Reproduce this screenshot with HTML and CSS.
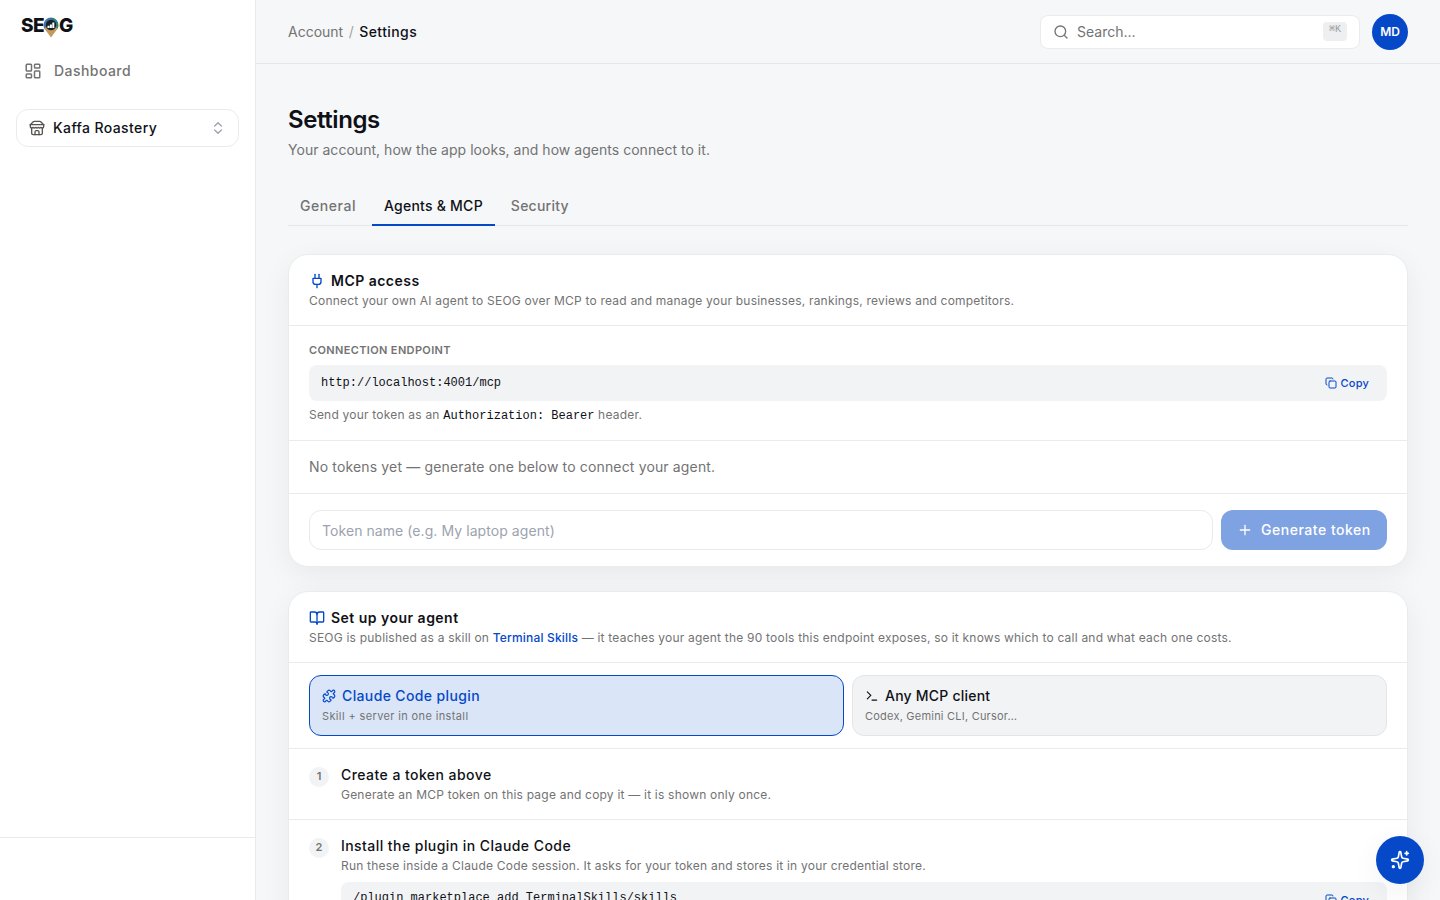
FILE: index.html
```html
<!DOCTYPE html>
<html lang="en">

<head>
    <meta charset="UTF-8">
    <meta name="viewport" content="width=device-width, initial-scale=1.0">
    <title>Settings</title>
    <link rel="stylesheet" href="styles.css">
</head>

<body>
    <div class="app">
        <!-- Sidebar -->
        <aside class="sidebar">
            <div class="logo">
                <span>SE</span>
                <svg class="logo-pin" width="16" height="21" viewBox="0 0 16 21">
                    <path d="M8 .5A7.500 7.500 0 0 0 .5 8c0 2 .7 3.400 1.600 4.800L8 8z" fill="#4a74a8" />
                    <path d="M8 .5A7.500 7.500 0 0 1 15.500 8c0 2-.7 3.400-1.600 4.800L8 8z" fill="#2f7f7c" />
                    <path d="M1 11 8 20.500l7-9.500L8 9z" fill="#c49a5c" />
                    <circle cx="8" cy="8" r="5.200" fill="#15202b" />
                    <path d="M4.500 11V8.800h2V11zM6.900 11V7.400h2V11zM9.300 11V5.400h2V11z" fill="#fff" />
                </svg>
                <span>G</span>
            </div>
            <nav class="side-nav">
                <a class="nav-link">
                    <svg class="icon" width="18" height="18" viewBox="0 0 24 24">
                        <rect width="7" height="9" x="3" y="3" rx="1" />
                        <rect width="7" height="5" x="14" y="3" rx="1" />
                        <rect width="7" height="9" x="14" y="12" rx="1" />
                        <rect width="7" height="5" x="3" y="16" rx="1" />
                    </svg>
                    Dashboard
                </a>
            </nav>
            <button class="business-select">
                <svg class="icon" width="16" height="16" viewBox="0 0 24 24">
                    <path d="m2 7 4.410-4.410A2 2 0 0 1 7.830 2h8.340a2 2 0 0 1 1.420.59L22 7" />
                    <path d="M4 12v8a2 2 0 0 0 2 2h12a2 2 0 0 0 2-2v-8" />
                    <path d="M15 22v-4a2 2 0 0 0-2-2h-2a2 2 0 0 0-2 2v4" />
                    <path d="M2 7h20" />
                    <path d="M22 7v3a2 2 0 0 1-2 2a2.700 2.700 0 0 1-1.590-.63.7.7 0 0 0-.82 0A2.700 2.700 0 0 1 16 12a2.700 2.700 0 0 1-1.590-.63.7.7 0 0 0-.82 0A2.700 2.700 0 0 1 12 12a2.700 2.700 0 0 1-1.590-.63.7.7 0 0 0-.82 0A2.700 2.700 0 0 1 8 12a2.700 2.700 0 0 1-1.590-.63.7.7 0 0 0-.82 0A2.700 2.700 0 0 1 4 12a2 2 0 0 1-2-2V7" />
                </svg>
                <span>Kaffa Roastery</span>
                <svg class="icon chevrons" width="16" height="16" viewBox="0 0 24 24">
                    <path d="m7 15 5 5 5-5" />
                    <path d="m7 9 5-5 5 5" />
                </svg>
            </button>
            <div class="sidebar-footer"></div>
        </aside>

        <div class="main">
            <!-- Top bar -->
            <header class="topbar">
                <div class="breadcrumb">
                    <span>Account</span>
                    <span class="slash">/</span>
                    <span class="current">Settings</span>
                </div>
                <div class="topbar-right">
                    <div class="search">
                        <svg class="icon" width="16" height="16" viewBox="0 0 24 24">
                            <circle cx="11" cy="11" r="8" />
                            <path d="m21 21-4.300-4.300" />
                        </svg>
                        <span>Search...</span>
                        <kbd>⌘K</kbd>
                    </div>
                    <div class="avatar">MD</div>
                </div>
            </header>

            <main class="content">
                <h1>Settings</h1>
                <p class="subtitle">Your account, how the app looks, and how agents connect to it.</p>

                <div class="tabs">
                    <a class="tab tab-general">General</a>
                    <a class="tab active">Agents &amp; MCP</a>
                    <a class="tab">Security</a>
                </div>

                <!-- MCP access -->
                <section class="card">
                    <div class="card-header">
                        <h2>
                            <svg class="icon" width="16" height="16" viewBox="0 0 24 24">
                                <path d="M12 22v-5" />
                                <path d="M9 8V2" />
                                <path d="M15 8V2" />
                                <path d="M18 8v5a4 4 0 0 1-4 4h-4a4 4 0 0 1-4-4V8Z" />
                            </svg>
                            MCP access
                        </h2>
                        <p>Connect your own AI agent to SEOG over MCP to read and manage your businesses, rankings, reviews and competitors.</p>
                    </div>
                    <div class="endpoint">
                        <div class="label">Connection endpoint</div>
                        <div class="code-box">
                            <code>http://localhost:4001/mcp</code>
                            <button class="copy">
                                <svg class="icon" width="12" height="12" viewBox="0 0 24 24">
                                    <rect width="14" height="14" x="8" y="8" rx="2" />
                                    <path d="M4 16c-1.100 0-2-.9-2-2V4c0-1.100.9-2 2-2h10c1.100 0 2 .9 2 2" />
                                </svg>
                                Copy
                            </button>
                        </div>
                        <p class="hint">Send your token as an <code>Authorization: Bearer</code> header.</p>
                    </div>
                    <div class="empty">No tokens yet — generate one below to connect your agent.</div>
                    <div class="token-form">
                        <input type="text" placeholder="Token name (e.g. My laptop agent)">
                        <button class="generate" disabled>
                            <svg class="icon" width="16" height="16" viewBox="0 0 24 24">
                                <path d="M5 12h14" />
                                <path d="M12 5v14" />
                            </svg>
                            Generate token
                        </button>
                    </div>
                </section>

                <!-- Agent setup -->
                <section class="card">
                    <div class="card-header">
                        <h2>
                            <svg class="icon" width="16" height="16" viewBox="0 0 24 24">
                                <path d="M12 7v14" />
                                <path d="M3 18a1 1 0 0 1-1-1V4a1 1 0 0 1 1-1h5a4 4 0 0 1 4 4 4 4 0 0 1 4-4h5a1 1 0 0 1 1 1v13a1 1 0 0 1-1 1h-6a3 3 0 0 0-3 3 3 3 0 0 0-3-3z" />
                            </svg>
                            Set up your agent
                        </h2>
                        <p>SEOG is published as a skill on <a>Terminal Skills</a> — it teaches your agent the 90 tools this endpoint exposes, so it knows which to call and what each one costs.</p>
                    </div>
                    <div class="options">
                        <button class="option selected">
                            <span class="option-title">
                                <svg class="icon" width="14" height="14" viewBox="0 0 24 24">
                                    <path d="M15.390 4.390a1 1 0 0 0 1.680-.474 2.500 2.500 0 1 1 3.014 3.015 1 1 0 0 0-.474 1.680l1.683 1.682a2.414 2.414 0 0 1 0 3.414L19.610 15.390a1 1 0 0 1-1.680-.474 2.500 2.500 0 1 0-3.014 3.015 1 1 0 0 1 .474 1.680l-1.683 1.682a2.414 2.414 0 0 1-3.414 0L8.610 19.610a1 1 0 0 0-1.680.474 2.500 2.500 0 1 1-3.014-3.015 1 1 0 0 0 .474-1.680l-1.683-1.682a2.414 2.414 0 0 1 0-3.414L4.390 8.610a1 1 0 0 1 1.680.474 2.500 2.500 0 1 0 3.014-3.015 1 1 0 0 1-.474-1.680l1.683-1.682a2.414 2.414 0 0 1 3.414 0z" />
                                </svg>
                                Claude Code plugin
                            </span>
                            <span class="option-text">Skill + server in one install</span>
                        </button>
                        <button class="option">
                            <span class="option-title">
                                <svg class="icon" width="14" height="14" viewBox="0 0 24 24">
                                    <path d="m4 17 6-6-6-6" />
                                    <path d="M12 19h8" />
                                </svg>
                                Any MCP client
                            </span>
                            <span class="option-text">Codex, Gemini CLI, Cursor…</span>
                        </button>
                    </div>
                    <div class="step">
                        <span class="step-number">1</span>
                        <div class="step-body">
                            <h3>Create a token above</h3>
                            <p>Generate an MCP token on this page and copy it — it is shown only once.</p>
                        </div>
                    </div>
                    <div class="step">
                        <span class="step-number">2</span>
                        <div class="step-body">
                            <h3>Install the plugin in Claude Code</h3>
                            <p>Run these inside a Claude Code session. It asks for your token and stores it in your credential store.</p>
                            <div class="code-box commands">
                                <code>/plugin marketplace add TerminalSkills/skills</code>
                                <button class="copy">
                                    <svg class="icon" width="12" height="12" viewBox="0 0 24 24">
                                        <rect width="14" height="14" x="8" y="8" rx="2" />
                                        <path d="M4 16c-1.100 0-2-.9-2-2V4c0-1.100.9-2 2-2h10c1.100 0 2 .9 2 2" />
                                    </svg>
                                    Copy
                                </button>
                            </div>
                        </div>
                    </div>
                </section>
            </main>
        </div>
    </div>

    <button class="assistant">
        <svg class="icon" width="20" height="20" viewBox="0 0 24 24">
            <path d="M11.017 2.814a1 1 0 0 1 1.966 0l1.051 5.558a2 2 0 0 0 1.594 1.594l5.558 1.051a1 1 0 0 1 0 1.966l-5.558 1.051a2 2 0 0 0-1.594 1.594l-1.051 5.558a1 1 0 0 1-1.966 0l-1.051-5.558a2 2 0 0 0-1.594-1.594l-5.558-1.051a1 1 0 0 1 0-1.966l5.558-1.051a2 2 0 0 0 1.594-1.594z" />
            <path d="M20 2v4" />
            <path d="M22 4h-4" />
            <circle cx="4" cy="20" r="1" />
        </svg>
    </button>
</body>

</html>
```
FILE: styles.css
```css
* {
    box-sizing: border-box;
}

body {
    margin: 0;
    height: 100vh;
    overflow: hidden;
    font-family: Inter, sans-serif;
    font-size: 14px;
    line-height: 20px;
    color: #0f1117;
    background-color: #f6f7f9;
}

h1,
h2,
h3,
p {
    margin: 0;
}

button,
input {
    font: inherit;
    color: inherit;
}

button {
    padding: 0;
    border: none;
    background: none;
    text-align: left;
    cursor: pointer;
}

.icon {
    flex: none;
    fill: none;
    stroke: currentColor;
    stroke-width: 2;
    stroke-linecap: round;
    stroke-linejoin: round;
}

.app {
    display: flex;
    height: 100vh;
    overflow: hidden;
}

/* Sidebar */
.sidebar {
    display: flex;
    flex-direction: column;
    flex: none;
    width: 256px;
    background-color: #fff;
    border-right: 1px solid #e8eaed;
}

.logo {
    display: flex;
    align-items: center;
    height: 50px;
    padding: 1px 0 0 21px;
    font-size: 19px;
    font-weight: 800;
    letter-spacing: -0.6px;
}

.logo-pin {
    margin: 3px 0 0 -1px;
}

.side-nav {
    padding: 3px 12px 0;
}

.nav-link {
    display: flex;
    align-items: center;
    gap: 12px;
    height: 36px;
    padding: 0 12px;
    font-weight: 500;
    letter-spacing: 0.45px;
    color: #737373;
}

.business-select {
    display: flex;
    align-items: center;
    gap: 8px;
    height: 38px;
    margin: 20px 16px 0;
    padding: 0 12px;
    border: 1px solid #eaebed;
    border-radius: 12px;
    font-weight: 500;
    letter-spacing: 0.4px;
}

.business-select .icon {
    color: #57534e;
}

.business-select .chevrons {
    margin-left: auto;
    color: #9ca3af;
}

.sidebar-footer {
    height: 63px;
    margin-top: auto;
    border-top: 1px solid #eaebed;
}

/* Top bar */
.main {
    flex: 1;
    min-width: 0;
}

.topbar {
    display: flex;
    align-items: center;
    justify-content: space-between;
    height: 64px;
    padding: 0 32px;
    border-bottom: 1px solid #e5e7ea;
}

.breadcrumb {
    display: flex;
    gap: 5.5px;
    color: #737373;
}

.slash {
    color: #a3a3a3;
}

.current {
    font-weight: 500;
    letter-spacing: 0.42px;
    color: #0f1117;
}

.topbar-right {
    display: flex;
    align-items: center;
    gap: 12px;
}

.search {
    display: flex;
    align-items: center;
    gap: 8px;
    width: 320px;
    height: 34px;
    padding: 0 12px;
    background-color: #fff;
    border: 1px solid #eaebed;
    border-radius: 8px;
    color: #737373;
}

.search kbd {
    height: 19px;
    margin-left: auto;
    padding: 0 6px;
    background-color: #eeeff1;
    border-radius: 4px;
    font-family: "Liberation Mono", monospace;
    font-size: 10px;
    line-height: 15px;
    color: #9a9da3;
}

.avatar {
    width: 36px;
    height: 36px;
    border-radius: 50%;
    background-color: #0549c8;
    color: #fff;
    font-size: 12px;
    font-weight: 600;
    line-height: 36px;
    text-align: center;
}

/* Page content */
.content {
    padding: 40px 32px 0;
}

h1 {
    font-size: 24px;
    font-weight: 600;
    line-height: 32px;
    letter-spacing: -0.42px;
}

.subtitle {
    margin-top: 4px;
    letter-spacing: 0.03px;
    color: #737373;
}

.tabs {
    display: flex;
    gap: 4px;
    height: 40px;
    margin: 26px 0 28px;
    border-bottom: 1px solid #e5e7ea;
}

.tab {
    height: 40px;
    padding: 10px 12px 0;
    font-weight: 500;
    letter-spacing: 0.24px;
    color: #737373;
}

.tab-general {
    letter-spacing: 0.55px;
}

.tab.active {
    color: #0f1117;
    border-bottom: 2px solid #0549c8;
}

.card {
    margin-bottom: 24px;
    background-color: #fff;
    border: 1px solid #eaebed;
    border-radius: 20px;
    box-shadow: 0 8px 30px rgba(0, 0, 0, 0.06);
}

.card-header {
    height: 71px;
    padding: 16px 20px 0;
    border-bottom: 1px solid #eaebed;
}

.card-header h2 {
    display: flex;
    align-items: center;
    gap: 6px;
    font-size: 14px;
    font-weight: 600;
    line-height: 20px;
    letter-spacing: 0.48px;
}

.card-header h2 .icon {
    color: #0549c8;
}

.card-header p,
.step p,
.hint {
    margin-top: 2px;
    font-size: 12px;
    line-height: 16px;
    letter-spacing: 0.21px;
    color: #737373;
}

.card-header a {
    font-weight: 500;
    letter-spacing: 0.18px;
    color: #0549c8;
}

.endpoint {
    height: 115px;
    padding: 16px 20px 0;
    border-bottom: 1px solid #eaebed;
}

.label {
    font-size: 11px;
    font-weight: 600;
    line-height: 17px;
    letter-spacing: 0.36px;
    text-transform: uppercase;
    color: #737373;
}

.code-box {
    display: flex;
    align-items: center;
    justify-content: space-between;
    height: 36px;
    margin-top: 6px;
    padding: 0 18px 0 12px;
    background-color: #f2f3f5;
    border-radius: 8px;
}

code {
    font-family: "Liberation Mono", monospace;
    font-size: 12px;
    letter-spacing: 0;
    color: #0f1117;
}

.copy {
    display: flex;
    align-items: center;
    gap: 4px;
    font-size: 11px;
    font-weight: 500;
    letter-spacing: 0.2px;
    color: #0549c8;
}

.endpoint .hint {
    margin-top: 6px;
}

.empty {
    padding: 16px 20px;
    border-bottom: 1px solid #eaebed;
    letter-spacing: 0.15px;
    color: #737373;
}

.token-form {
    display: flex;
    gap: 8px;
    padding: 16px 20px;
}

.token-form input {
    flex: 1;
    height: 40px;
    padding: 0 12px;
    background-color: #fff;
    border: 1px solid #e8eaed;
    border-radius: 12px;
    letter-spacing: 0.07px;
}

.token-form input::placeholder {
    color: #9ca3af;
}

.generate {
    display: flex;
    align-items: center;
    gap: 8px;
    width: 166px;
    height: 40px;
    padding: 0 16px;
    background-color: #7fa2e2;
    border-radius: 12px;
    font-weight: 500;
    letter-spacing: 0.52px;
    color: #fff;
    white-space: nowrap;
}

/* Agent options */
.options {
    display: grid;
    grid-template-columns: 1fr 1fr;
    gap: 8px;
    padding: 12px 20px;
    border-bottom: 1px solid #eaebed;
}

.option {
    height: 61px;
    padding: 0 12px;
    background-color: #f2f3f5;
    border: 1px solid #e3e5e8;
    border-radius: 12px;
    letter-spacing: 0.22px;
}

.option.selected {
    background-color: #dae5f7;
    border-color: #0549c8;
    letter-spacing: 0.37px;
}

.option-title {
    display: flex;
    align-items: center;
    gap: 6px;
    font-weight: 500;
}

.selected .option-title {
    color: #0549c8;
}

.option-text {
    display: block;
    margin-top: 2px;
    font-size: 11px;
    line-height: 17px;
    color: #737373;
}

/* Steps */
.step {
    display: flex;
    gap: 12px;
    padding: 16px 20px;
    border-bottom: 1px solid #eaebed;
}

.step-number {
    flex: none;
    width: 20px;
    height: 20px;
    margin-top: 2px;
    border-radius: 50%;
    background-color: #f2f3f5;
    color: #737373;
    font-size: 11px;
    font-weight: 600;
    line-height: 19px;
    text-align: center;
}

.step-body {
    flex: 1;
}

.step h3 {
    font-size: 14px;
    font-weight: 500;
    line-height: 20px;
    letter-spacing: 0.44px;
}

.commands {
    align-items: flex-start;
    height: 56px;
    margin-top: 8px;
    padding-top: 6px;
}

.commands .copy {
    margin-top: 2px;
}

.assistant {
    position: fixed;
    right: 16px;
    bottom: 16px;
    display: flex;
    align-items: center;
    justify-content: center;
    width: 48px;
    height: 48px;
    border-radius: 50%;
    background-color: #0549c8;
    color: #fff;
    box-shadow: 0 8px 30px rgba(0, 0, 0, 0.06);
}
```
